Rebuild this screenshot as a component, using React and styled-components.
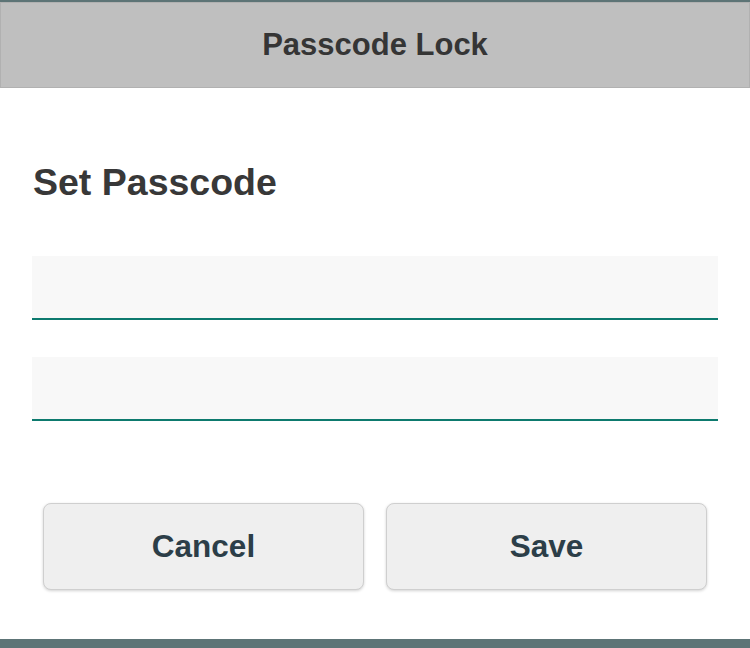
import React from 'react';
import styled, { createGlobalStyle } from 'styled-components';

const GlobalStyle = createGlobalStyle`
  html, body {
    margin: 0;
    padding: 0;
    background: #ffffff;
  }
  body {
    font-family: "Liberation Sans", Arial, sans-serif;
  }
`;

const Screen = styled.div`
  display: flex;
  flex-direction: column;
  width: 750px;
  height: 648px;
  overflow: hidden;
  background: #ffffff;
`;

const Strip = styled.div`
  flex: none;
  height: ${(p) => p.size}px;
  background: #5d7476;
`;

const Header = styled.header`
  flex: none;
  display: flex;
  align-items: center;
  justify-content: center;
  height: 86px;
  box-sizing: border-box;
  background: #bfbfbf;
  border: 1px solid #b1b1b1;
  color: #353535;
  font-size: 31px;
  font-weight: 700;
`;

const Body = styled.main`
  flex: 1;
  display: flex;
  flex-direction: column;
  padding: 73px 32px 0;
`;

const Title = styled.h2`
  margin: 0 0 52px 1px;
  font-size: 37.5px;
  line-height: 43px;
  font-weight: 700;
  color: #383838;
`;

const Field = styled.input`
  display: block;
  height: 64px;
  box-sizing: border-box;
  margin: 0 0 37px;
  padding: 0 12px;
  border: none;
  border-bottom: 2px solid #0d7a6e;
  background: #f8f8f8;
  font-size: 24px;
  outline: none;
`;

const Actions = styled.div`
  display: grid;
  grid-template-columns: 1fr 1fr;
  gap: 22px;
  margin: 45px 11px 0;
`;

const Button = styled.button`
  height: 87px;
  border: 1px solid #cfcfcf;
  border-radius: 8px;
  background: #efefef;
  box-shadow: 0 1px 3px rgba(0, 0, 0, 0.18);
  color: #2c3e48;
  font-family: "Liberation Sans", Arial, sans-serif;
  font-size: 31.5px;
  font-weight: 700;
  cursor: pointer;
`;

const App = () => (
  <Screen>
    <GlobalStyle />
    <Strip size={2} />
    <Header>Passcode Lock</Header>
    <Body>
      <Title>Set Passcode</Title>
      <Field type="password" aria-label="Passcode" />
      <Field type="password" aria-label="Confirm passcode" />
      <Actions>
        <Button type="button">Cancel</Button>
        <Button type="button">Save</Button>
      </Actions>
    </Body>
    <Strip size={9} />
  </Screen>
);

export default App;
